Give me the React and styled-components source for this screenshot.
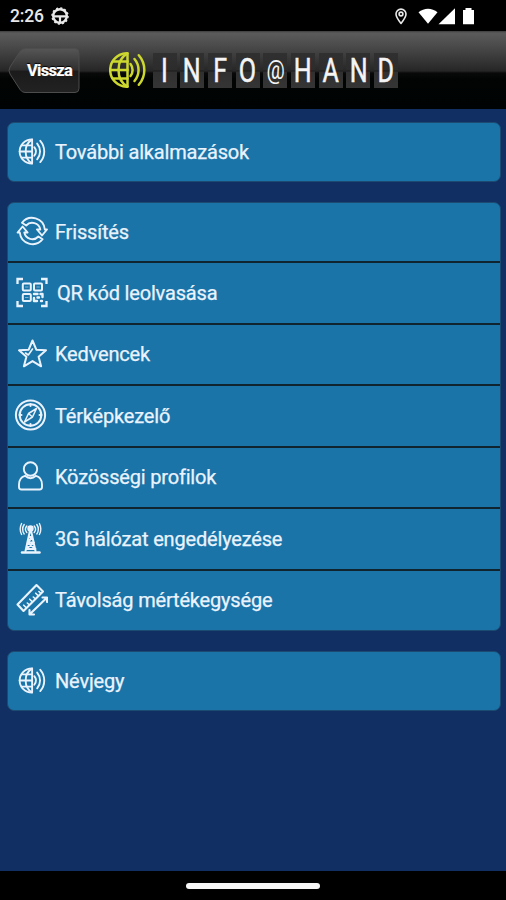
import React from 'react'
import styled, { createGlobalStyle } from 'styled-components'

const GlobalStyle = createGlobalStyle`
  * {
    box-sizing: border-box;
  }

  body {
    margin: 0;
    background: #112f63;
    font-family: Roboto, 'Liberation Sans', sans-serif;
  }
`

const Screen = styled.div`
  width: 506px;
  height: 900px;
  display: flex;
  flex-direction: column;
  background: #112f63;
  overflow: hidden;
`

const StatusBar = styled.div`
  height: 31px;
  flex: none;
  display: flex;
  align-items: center;
  padding: 0 28.5px 0 10px;
  background: #000;
  color: #e8e8e8;
`

const Clock = styled.span`
  width: 40px;
  font-size: 17.5px;
  line-height: 31px;
  padding-top: 1px;
  letter-spacing: -0.2px;
  font-weight: 500;
  white-space: nowrap;
`

const StatusIcons = styled.div`
  margin-left: auto;
  display: flex;
  align-items: center;
  gap: 10px;
`

const Header = styled.header`
  height: 78px;
  flex: none;
  display: flex;
  align-items: flex-start;
  padding: 16px 0 0 8px;
  background: linear-gradient(#3c3c3c 0, #5b5b5b 2px, #494949 16px, #262626 40px, #090909 42px, #020404 48px, #000303 100%);
`

const BackButton = styled.button`
  width: 72px;
  height: 47px;
  padding: 0;
  border: 0;
  background: none;
  display: grid;
  font-family: inherit;

  > * {
    grid-area: 1 / 1;
  }
`

const BackLabel = styled.span`
  padding: 1px 0 0 19px;
  color: #fff;
  font-size: 16.5px;
  line-height: 46px;
  font-weight: 700;
  letter-spacing: -0.7px;
  text-align: left;
  text-shadow: 0 -1px 1px #000;
  -webkit-text-stroke: 0.2px #fff;
`

const Brand = styled.div`
  display: flex;
  align-items: center;
  padding-left: 29px;
  margin-top: 5px;
`

const Tiles = styled.div`
  display: flex;
  gap: 3.7px;
  margin-left: 5.5px;
`

const Tile = styled.span`
  width: 24px;
  height: 35px;
  display: flex;
  align-items: center;
  justify-content: center;
  background: linear-gradient(#303030 0, #2c2c2c 17px, #1b1b1b 18px, #303030 19px, #353535);
`

const Letter = styled.span`
  color: #f4f4f4;
  font-size: ${(props) => (props.$small ? '26px' : '33px')};
  line-height: 35px;
  transform: scaleX(${(props) => (props.$small ? 0.78 : 0.76)});
  -webkit-text-stroke: ${(props) => (props.$small ? '0' : '0.5px')} #f4f4f4;
`

const Content = styled.main`
  flex: 1;
  display: flex;
  flex-direction: column;
  gap: 20px;
  padding: 13px 5px 0 7px;
`

const Card = styled.section`
  border: 1px solid #1d4a70;
  border-radius: 7px;
  background: #1b74a8;
  overflow: hidden;
`

const Row = styled.div`
  height: 61.5px;
  display: flex;
  align-items: center;
  padding-left: 6px;
  color: #eaf3fd;

  & + & {
    border-top: 2px solid #10242f;
  }

  &:first-child {
    height: 58px;
  }
`

const Label = styled.span`
  margin-left: ${(props) => (props.$wide ? '9px' : '7px')};
  font-size: 20px;
  line-height: 28px;
  letter-spacing: -0.18px;
  white-space: nowrap;
  -webkit-text-stroke: 0.25px currentColor;
`

const NavBar = styled.div`
  height: 29px;
  flex: none;
  display: flex;
  justify-content: center;
  align-items: center;
  background: #000;
`

const Pill = styled.div`
  width: 134px;
  height: 6px;
  border-radius: 3px;
  background: #f7f7f7;
`

const Svg = styled.svg`
  display: block;
  flex: none;
  fill: none;
  stroke: currentColor;
  stroke-linecap: round;
  stroke-linejoin: round;
`

const GlobePaths = () => (
  <>
    <path d="M18.5 1.2C8 1.5 1.2 9 1.2 18S8 34.5 18.5 34.8Z" />
    <path d="M18.5 1.5C12 5 9.5 11 9.5 18s2.5 13 9 16.5M4 9.5h14.500M1.2 18h17.300M4 26.500h14.500" />
    <path d="M21.5 12c2.800 3.500 2.800 8.500 0 12M25.500 7c5.400 6.500 5.400 15.500 0 22M29.800 3.200c7.400 8.500 7.400 21 0 29.600" />
  </>
)

const GlobeIcon = () => (
  <Svg width="34" height="34" viewBox="0 0 34 34">
    <g transform="translate(4.8 3.500) scale(0.72)" strokeWidth="2.600">
      <GlobePaths />
    </g>
  </Svg>
)

const RefreshArrow = () => (
  <path d="M8 7.800A12.800 12.800 0 0 1 30.800 14.500H33L28 20.500l-5-6h3.300A8.200 8.200 0 0 0 12.200 10.500z" />
)

const RefreshIcon = () => (
  <Svg width="34" height="34" viewBox="0 0 34 34" strokeWidth="1.900">
    <RefreshArrow />
    <g transform="rotate(180 18.300 16)">
      <RefreshArrow />
    </g>
  </Svg>
)

const QrIcon = () => (
  <Svg width="34" height="34" viewBox="0 0 34 34" strokeWidth="2">
    <path d="M3.500 8V3H9M27 3h5.500v5M3.500 25v5H9M27 30h5.500v-5" strokeLinecap="butt" strokeLinejoin="miter" strokeWidth="2.300" />
    <rect x="8.800" y="7.500" width="8" height="7" rx="1" />
    <rect x="20" y="7.500" width="8" height="7" rx="1" />
    <rect x="8.800" y="18" width="8" height="7" rx="1" />
    <path d="M20 18h3.500M26.500 18h2v3M20 22v3h3M23.500 21.500h1.500M27 25h1" strokeWidth="2.400" />
    <path d="M11.500 11h2.600M22.800 11h2.600M11.500 21.500h2.600" strokeWidth="1" opacity="0.500" />
  </Svg>
)

const StarIcon = () => (
  <Svg width="34" height="34" viewBox="0 0 34 34" strokeWidth="2" strokeLinejoin="miter">
    <path d="M18.500 3.500l3.800 9.200 9.700.6-7.400 6.400 2.500 9.600-8.600-5.200-8.600 5.200 2.500-9.600L5 13.300l9.700-.6z" />
    <path d="M11.500 16l2.800 2 4.200-6" strokeWidth="1.600" />
  </Svg>
)

const CompassIcon = () => (
  <Svg width="34" height="34" viewBox="0 0 34 34" strokeWidth="2">
    <circle cx="16.500" cy="16" r="14.600" />
    <circle cx="16.500" cy="16" r="10.800" />
    <path d="M22.500 9.500L18.500 18l-8 5 4-8.500zM14.500 14.500l4 3.500" strokeWidth="1.500" />
    <path d="M16.500 5v2M16.500 25v2M5.500 16h2M25.500 16h2" />
  </Svg>
)

const ProfileIcon = () => (
  <Svg width="34" height="34" viewBox="0 0 34 34" strokeWidth="1.900">
    <circle cx="16.500" cy="9" r="6.700" />
    <path d="M11 15.800C7 17 5 20 5 24.500V27c0 1.500 1 2.500 2.500 2.500h18c1.500 0 2.500-1 2.500-2.500v-2.500c0-4.500-2-7.500-6-8.700-3.500 3-7.500 3-11 0z" />
  </Svg>
)

const TowerIcon = () => (
  <Svg width="34" height="34" viewBox="0 0 34 34" strokeWidth="2">
    <path d="M12.800 4a5 5 0 0 0 0 6.500M20.200 4a5 5 0 0 1 0 6.500M10.200 2.500a8.500 8.500 0 0 0 0 9.500M22.800 2.500a8.500 8.500 0 0 1 0 9.500M7.600 1.500a12 12 0 0 0 0 11M25.400 1.500a12 12 0 0 1 0 11" strokeWidth="1.400" />
    <circle cx="16.500" cy="6.500" r="2.200" fill="currentColor" />
    <path d="M16 8.500L11.500 29M17 8.500L21.500 29M14.500 15h4l-5 5.500h6.500L12 27h9.500M13.500 20.500l8 6.500" />
    <path d="M8 30.500h17.500" strokeWidth="2.500" />
  </Svg>
)

const RulerIcon = () => (
  <Svg width="34" height="34" viewBox="0 0 34 34" strokeWidth="2.100">
    <path d="M3.500 21.500L22.500 2 29 8.500 9.500 28z" />
    <path d="M12 24.500l-2.300-2.300M15 21.500L13.300 20M18 18.500l-2.300-2.300M21 15.500L19.300 14M24 12.500l-2.300-2.300M26.500 10l-1.600-1.500" strokeWidth="1.600" />
    <path d="M16 31L32.500 15M15.500 27v4.500H20M28.500 14.500H33V19" />
  </Svg>
)

const GearIcon = () => (
  <Svg width="20" height="20" viewBox="0 0 20 20">
    <circle cx="10" cy="10" r="6.800" strokeWidth="2.400" />
    <circle cx="10" cy="10" r="8" strokeWidth="1.500" strokeDasharray="2 2.190" strokeLinecap="butt" />
    <path d="M4 10.300h12M10 11v5" strokeWidth="2.200" />
  </Svg>
)

const PinIcon = () => (
  <Svg width="14" height="20" viewBox="0 0 14 20" strokeWidth="1.600">
    <path d="M7 17.500C4 13.800 2 11 2 8.100a5 5 0 0 1 10 0c0 2.900-2 5.700-5 9.400z" />
    <circle cx="7" cy="8" r="1.900" />
  </Svg>
)

const SignalIcons = () => (
  <Svg width="60" height="20" viewBox="0 0 60 20">
    <g fill="#fff" stroke="none">
      <path d="M.5 6.300c5.500-4.800 13.500-4.800 19 0L10 17.800z" />
      <path d="M20.500 18.300L37 2.300v16z" />
      <path d="M45 4h2.500V2h6v2H56v14.300H45z" />
    </g>
  </Svg>
)

const items = [
  { label: 'Frissítés', Icon: RefreshIcon },
  { label: 'QR kód leolvasása', Icon: QrIcon, wide: true },
  { label: 'Kedvencek', Icon: StarIcon },
  { label: 'Térképkezelő', Icon: CompassIcon },
  { label: 'Közösségi profilok', Icon: ProfileIcon },
  { label: '3G hálózat engedélyezése', Icon: TowerIcon },
  { label: 'Távolság mértékegysége', Icon: RulerIcon },
]

const App = () => {
  return (
    <Screen>
      <GlobalStyle />
      <StatusBar>
        <Clock>2:26</Clock>
        <GearIcon />
        <StatusIcons>
          <PinIcon />
          <SignalIcons />
        </StatusIcons>
      </StatusBar>

      <Header>
        <BackButton>
          <Svg width="72" height="47" viewBox="0 0 72 47">
            <defs>
              <linearGradient id="back" x1="0" y1="0" x2="0" y2="1">
                <stop offset="0" stopColor="#565656" />
                <stop offset="0.480" stopColor="#303030" />
                <stop offset="0.520" stopColor="#1b1b1b" />
                <stop offset="1" stopColor="#222" />
              </linearGradient>
            </defs>
            <path
              d="M17 1.500h50q4 0 4 4v36q0 4-4 4H17q-3 0-5-3L2 27q-2-3.500 0-7L12 4.500q2-3 5-3z"
              fill="url(#back)"
              stroke="#4d4d4d"
            />
          </Svg>
          <BackLabel>Vissza</BackLabel>
        </BackButton>
        <Brand>
          <Svg width="38" height="36" viewBox="0 0 38 36" strokeWidth="2.500" color="#cdd82f">
            <GlobePaths />
          </Svg>
          <Tiles>
            {'INFO@HAND'.split('').map((char, index) => (
              <Tile key={index}>
                <Letter $small={char === '@'}>{char}</Letter>
              </Tile>
            ))}
          </Tiles>
        </Brand>
      </Header>

      <Content>
        <Card>
          <Row>
            <GlobeIcon />
            <Label>További alkalmazások</Label>
          </Row>
        </Card>
        <Card>
          {items.map(({ label, Icon, wide }) => (
            <Row key={label}>
              <Icon />
              <Label $wide={wide}>{label}</Label>
            </Row>
          ))}
        </Card>
        <Card>
          <Row>
            <GlobeIcon />
            <Label>Névjegy</Label>
          </Row>
        </Card>
      </Content>

      <NavBar>
        <Pill />
      </NavBar>
    </Screen>
  )
}

export default App
